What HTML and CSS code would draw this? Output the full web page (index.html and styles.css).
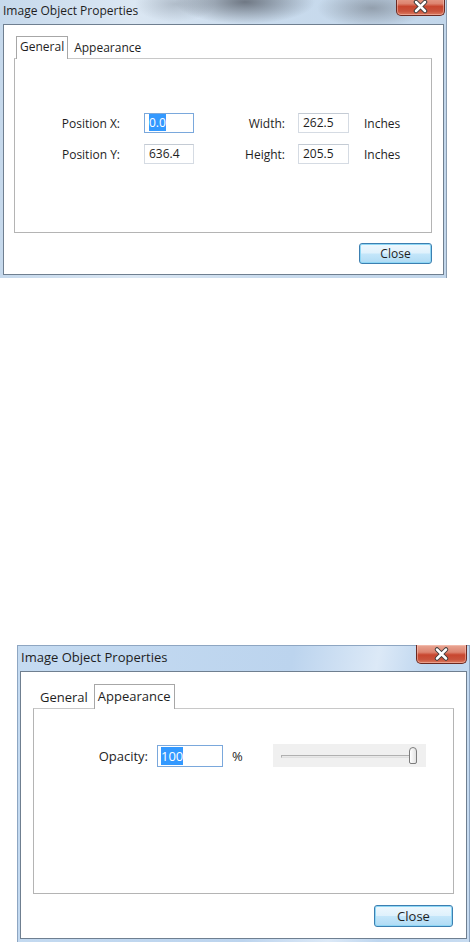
FILE: index.html
```html
<!DOCTYPE html>
<html lang="en">
<head>
    <meta charset="UTF-8">
    <title>Image Object Properties</title>
    <link rel="stylesheet" href="styles.css">
</head>
<body>
    <!-- General tab -->
    <div class="window window-top">
        <div class="titlebar">
            <span class="title">Image Object Properties</span>
            <span class="close-x">
                <svg viewBox="0 0 47 19" width="47" height="19">
                    <path d="M19 6 L28 15 M28 6 L19 15" stroke="#3b3b3b" stroke-width="4.5" stroke-linecap="round"/>
                    <path d="M19 6 L28 15 M28 6 L19 15" stroke="#ffffff" stroke-width="2.5" stroke-linecap="round"/>
                </svg>
            </span>
        </div>
        <div class="client">
            <div class="tabs">
                <div class="tab active">General</div>
                <div class="tab">Appearance</div>
            </div>
            <div class="panel">
                <div class="fields">
                    <span class="label label-left">Position X:</span>
                    <span class="field focused"><span class="selected">0.0</span></span>
                    <span class="label label-right">Width:</span>
                    <span class="field">262.5</span>
                    <span class="unit">Inches</span>

                    <span class="label label-left">Position Y:</span>
                    <span class="field">636.4</span>
                    <span class="label label-right">Height:</span>
                    <span class="field">205.5</span>
                    <span class="unit">Inches</span>
                </div>
            </div>
            <div class="footer">
                <button class="btn">Close</button>
            </div>
        </div>
    </div>

    <!-- Appearance tab -->
    <div class="window window-bottom">
        <div class="titlebar">
            <span class="title">Image Object Properties</span>
            <span class="close-x">
                <svg viewBox="0 0 49 18" width="49" height="18">
                    <path d="M20 4.5 L29 13.5 M29 4.5 L20 13.5" stroke="#3b3b3b" stroke-width="4.5" stroke-linecap="round"/>
                    <path d="M20 4.5 L29 13.5 M29 4.5 L20 13.5" stroke="#ffffff" stroke-width="2.5" stroke-linecap="round"/>
                </svg>
            </span>
        </div>
        <div class="client">
            <div class="tabs">
                <div class="tab">General</div>
                <div class="tab active">Appearance</div>
            </div>
            <div class="panel">
                <div class="opacity-row">
                    <span class="label">Opacity:</span>
                    <span class="field focused"><span class="selected">100</span></span>
                    <span class="percent">%</span>
                    <div class="slider">
                        <div class="track"></div>
                        <div class="thumb"></div>
                    </div>
                </div>
            </div>
            <div class="footer">
                <button class="btn">Close</button>
            </div>
        </div>
    </div>
</body>
</html>
```

FILE: styles.css
```css
* {
    box-sizing: border-box;
    margin: 0;
    padding: 0;
}

body {
    font-family: "Open Sans", "Noto Sans", sans-serif;
    font-size: 12px;
    color: #1e1e1e;
    background-color: #ffffff;
}

/* window frame */

.window {
    display: flex;
    flex-direction: column;
    padding: 0 3px 3px;
}

.window-top {
    width: 447px;
    height: 278px;
    border-right: 1px solid #8a9db2;
    padding-right: 2px;
    background:
        radial-gradient(ellipse 70px 22px at 245px 2px, rgba(80, 86, 96, 0.75), transparent),
        radial-gradient(ellipse 40px 18px at 175px 4px, rgba(140, 150, 162, 0.5), transparent),
        radial-gradient(ellipse 55px 20px at 372px 8px, rgba(105, 112, 122, 0.55), transparent),
        linear-gradient(90deg, #c6d9ec 0%, #dbe7f3 30%, #c9dbed 60%, #c2d6ea 100%);
}

.window-bottom {
    width: 453px;
    height: 297px;
    margin-top: 367px;
    margin-left: 17px;
    font-size: 13px;
    border: 1px solid #8ea6c2;
    border-bottom: none;
    padding: 0 2px 3px;
    background: linear-gradient(100deg, #c5dbf1 0%, #bcd4ee 55%, #dce9f7 72%, #bed6ef 82%, #c8dcf1 100%);
}

.titlebar {
    display: flex;
    justify-content: space-between;
    align-items: flex-start;
}

.window-top .titlebar {
    height: 24px;
}

.window-bottom .titlebar {
    height: 25px;
}

.title {
    padding-top: 2px;
    font-size: 12px;
    color: #1e1e1e;
}

.window-bottom .title {
    font-size: 13px;
    padding-top: 2px;
    padding-left: 1px;
}

.close-x {
    display: block;
    border: 1px solid #6b2a22;
    border-top: none;
    border-radius: 0 0 5px 5px;
    background: linear-gradient(#e9a795 0%, #dd8470 40%, #c8462f 55%, #c9533c 80%, #dc7c62 100%);
    box-shadow: inset 0 0 0 1px rgba(255, 210, 200, 0.45);
    line-height: 0;
}

.window-top .close-x {
    margin-top: -4px;
    margin-right: -1px;
}

.window-bottom .close-x {
    margin-top: -1px;
}

/* client area */

.client {
    flex: 1;
    display: flex;
    flex-direction: column;
    background-color: #ffffff;
    border: 1px solid #6f7f90;
}

.window-top .client {
    padding: 11px 11px 10px 10px;
}

.window-bottom .client {
    padding: 12px 12px 11px 12px;
}

.tabs {
    display: flex;
    align-items: flex-end;
}

.window-top .tabs {
    height: 22px;
}

.window-bottom .tabs {
    height: 24px;
}

.tab {
    padding: 0 6px;
    line-height: 20px;
    border: 1px solid transparent;
    border-bottom: none;
    position: relative;
}

.tab.active {
    border-color: #a7a7a7;
    background-color: #ffffff;
    margin-bottom: -1px;
    z-index: 1;
}

.window-top .tab.active {
    padding: 0 3px 1px;
    height: 23px;
    margin-left: 2px;
}

.window-top .tab:last-child {
    padding-left: 5px;
}

.window-bottom .tab {
    line-height: 22px;
}

.window-bottom .tab:first-child {
    padding: 0 5px 0 6px;
}

.window-bottom .tab.active {
    padding: 0 3px 1px;
    height: 25px;
}

.panel {
    flex: 1;
    border: 1px solid #b4b4b4;
    border-top-color: #c8c8c8;
}

.window-top .panel {
    padding-top: 54px;
}

.window-bottom .panel {
    padding-top: 35px;
}

/* fields */

.fields {
    display: grid;
    grid-template-columns: 129px 50px 104px 51px auto;
    row-gap: 11px;
    align-items: center;
}

.label-left {
    text-align: right;
    padding-right: 24px;
}

.label-right {
    text-align: right;
    padding-right: 13px;
}

.unit {
    padding-left: 15px;
}

.field {
    display: block;
    height: 20px;
    line-height: 18px;
    padding: 0 4px;
    border: 1px solid #d5dbe3;
    border-top-color: #c4cbd4;
    background-color: #ffffff;
}

.field.focused {
    border-color: #7aa8dc;
}

.selected {
    background-color: #3399ff;
    color: #ffffff;
}

.footer {
    display: flex;
    justify-content: flex-end;
}

.window-top .footer {
    padding-top: 10px;
}

.window-bottom .footer {
    padding-top: 11px;
    padding-right: 1px;
}

.btn {
    font-family: inherit;
    font-size: 12px;
    color: #1e1e1e;
    width: 73px;
    height: 21px;
    border: 1px solid #3c7fb1;
    border-radius: 3px;
    background: linear-gradient(#eef8fe 0%, #dff1fc 48%, #c4e6fa 52%, #b0dbf4 100%);
    box-shadow: inset 0 0 0 1px #8fd7f5;
}

.window-bottom .btn {
    font-size: 13px;
    width: 79px;
    height: 22px;
}

/* opacity row */

.opacity-row {
    display: flex;
    align-items: center;
}

.opacity-row .label {
    width: 114px;
    text-align: right;
    margin-right: 9px;
}

.opacity-row .field {
    width: 66px;
    height: 22px;
    line-height: 20px;
    padding: 0 3px;
}

.percent {
    margin-left: 9px;
    width: 11px;
}

.slider {
    position: relative;
    margin-left: 30px;
    width: 153px;
    height: 23px;
    background-color: #f0f0f0;
    padding: 11px 12px 0 8px;
}

.track {
    height: 3px;
    border: 1px solid #b0b0b0;
    border-bottom-color: #e0e0e0;
    background-color: #e8e8e8;
}

.thumb {
    position: absolute;
    left: 136px;
    top: 3px;
    width: 8px;
    height: 17px;
    border: 1px solid #7c7c7c;
    border-radius: 4px 4px 2px 2px;
    background: linear-gradient(90deg, #ffffff, #e2e2e2);
}
```
